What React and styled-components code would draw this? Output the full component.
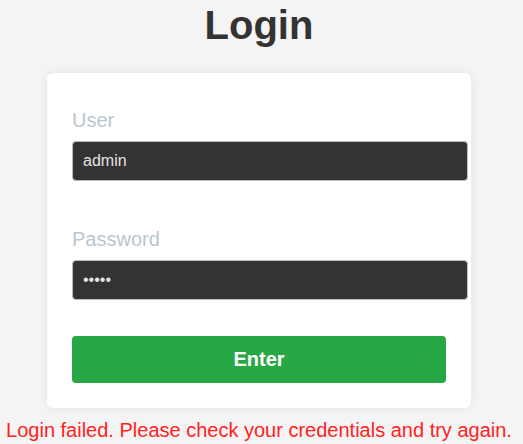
import styled, { createGlobalStyle } from 'styled-components'

const GlobalStyle = createGlobalStyle`
  html, body {
    margin: 0;
    padding: 0;
    background-color: #f4f4f4;
    font-family: "Liberation Sans", Arial, sans-serif;
  }
`;

const Page = styled.div`
  display: flex;
  flex-direction: column;
  align-items: center;
  padding-right: 5px;
`;

const Title = styled.h1`
  margin: 3px 0 25px;
  font-size: 40px;
  font-weight: bold;
  color: #333;
`;

const Card = styled.form`
  display: flex;
  flex-direction: column;
  width: 374px;
  padding: 25px;
  background-color: #fff;
  border-radius: 6px;
  box-shadow: 0 0 10px rgba(0, 0, 0, 0.08);
`;

const Field = styled.div`
  margin-bottom: 36px;
`;

const Label = styled.label`
  display: block;
  margin: 11px 0 9px;
  font-size: 20px;
  color: #b9c6cf;
`;

const Input = styled.input`
  display: block;
  width: 100%;
  padding: 10px;
  font-family: inherit;
  font-size: 16px;
  line-height: 18px;
  color: #e4e4e4;
  background-color: #333;
  border: 1px solid #bbb;
  border-radius: 4px;
  outline: none;
`;

const Button = styled.button`
  display: block;
  width: 100%;
  padding: 12px;
  font-family: inherit;
  font-size: 20px;
  font-weight: bold;
  line-height: 23px;
  color: #fff;
  background-color: #28a745;
  border: none;
  border-radius: 4px;
`;

const Error = styled.p`
  margin: 11px 0 0;
  font-size: 20px;
  color: #ff2222;
  white-space: nowrap;
`;

export default function App() {
  return (
    <>
      <GlobalStyle />
      <Page>
        <Title>Login</Title>
        <Card onSubmit={e => e.preventDefault()}>
          <Field>
            <Label htmlFor="user">User</Label>
            <Input id="user" type="text" defaultValue="admin" />
          </Field>
          <Field>
            <Label htmlFor="password">Password</Label>
            <Input id="password" type="password" defaultValue="admin" />
          </Field>
          <Button type="submit">Enter</Button>
        </Card>
        <Error>Login failed. Please check your credentials and try again.</Error>
      </Page>
    </>
  )
}
